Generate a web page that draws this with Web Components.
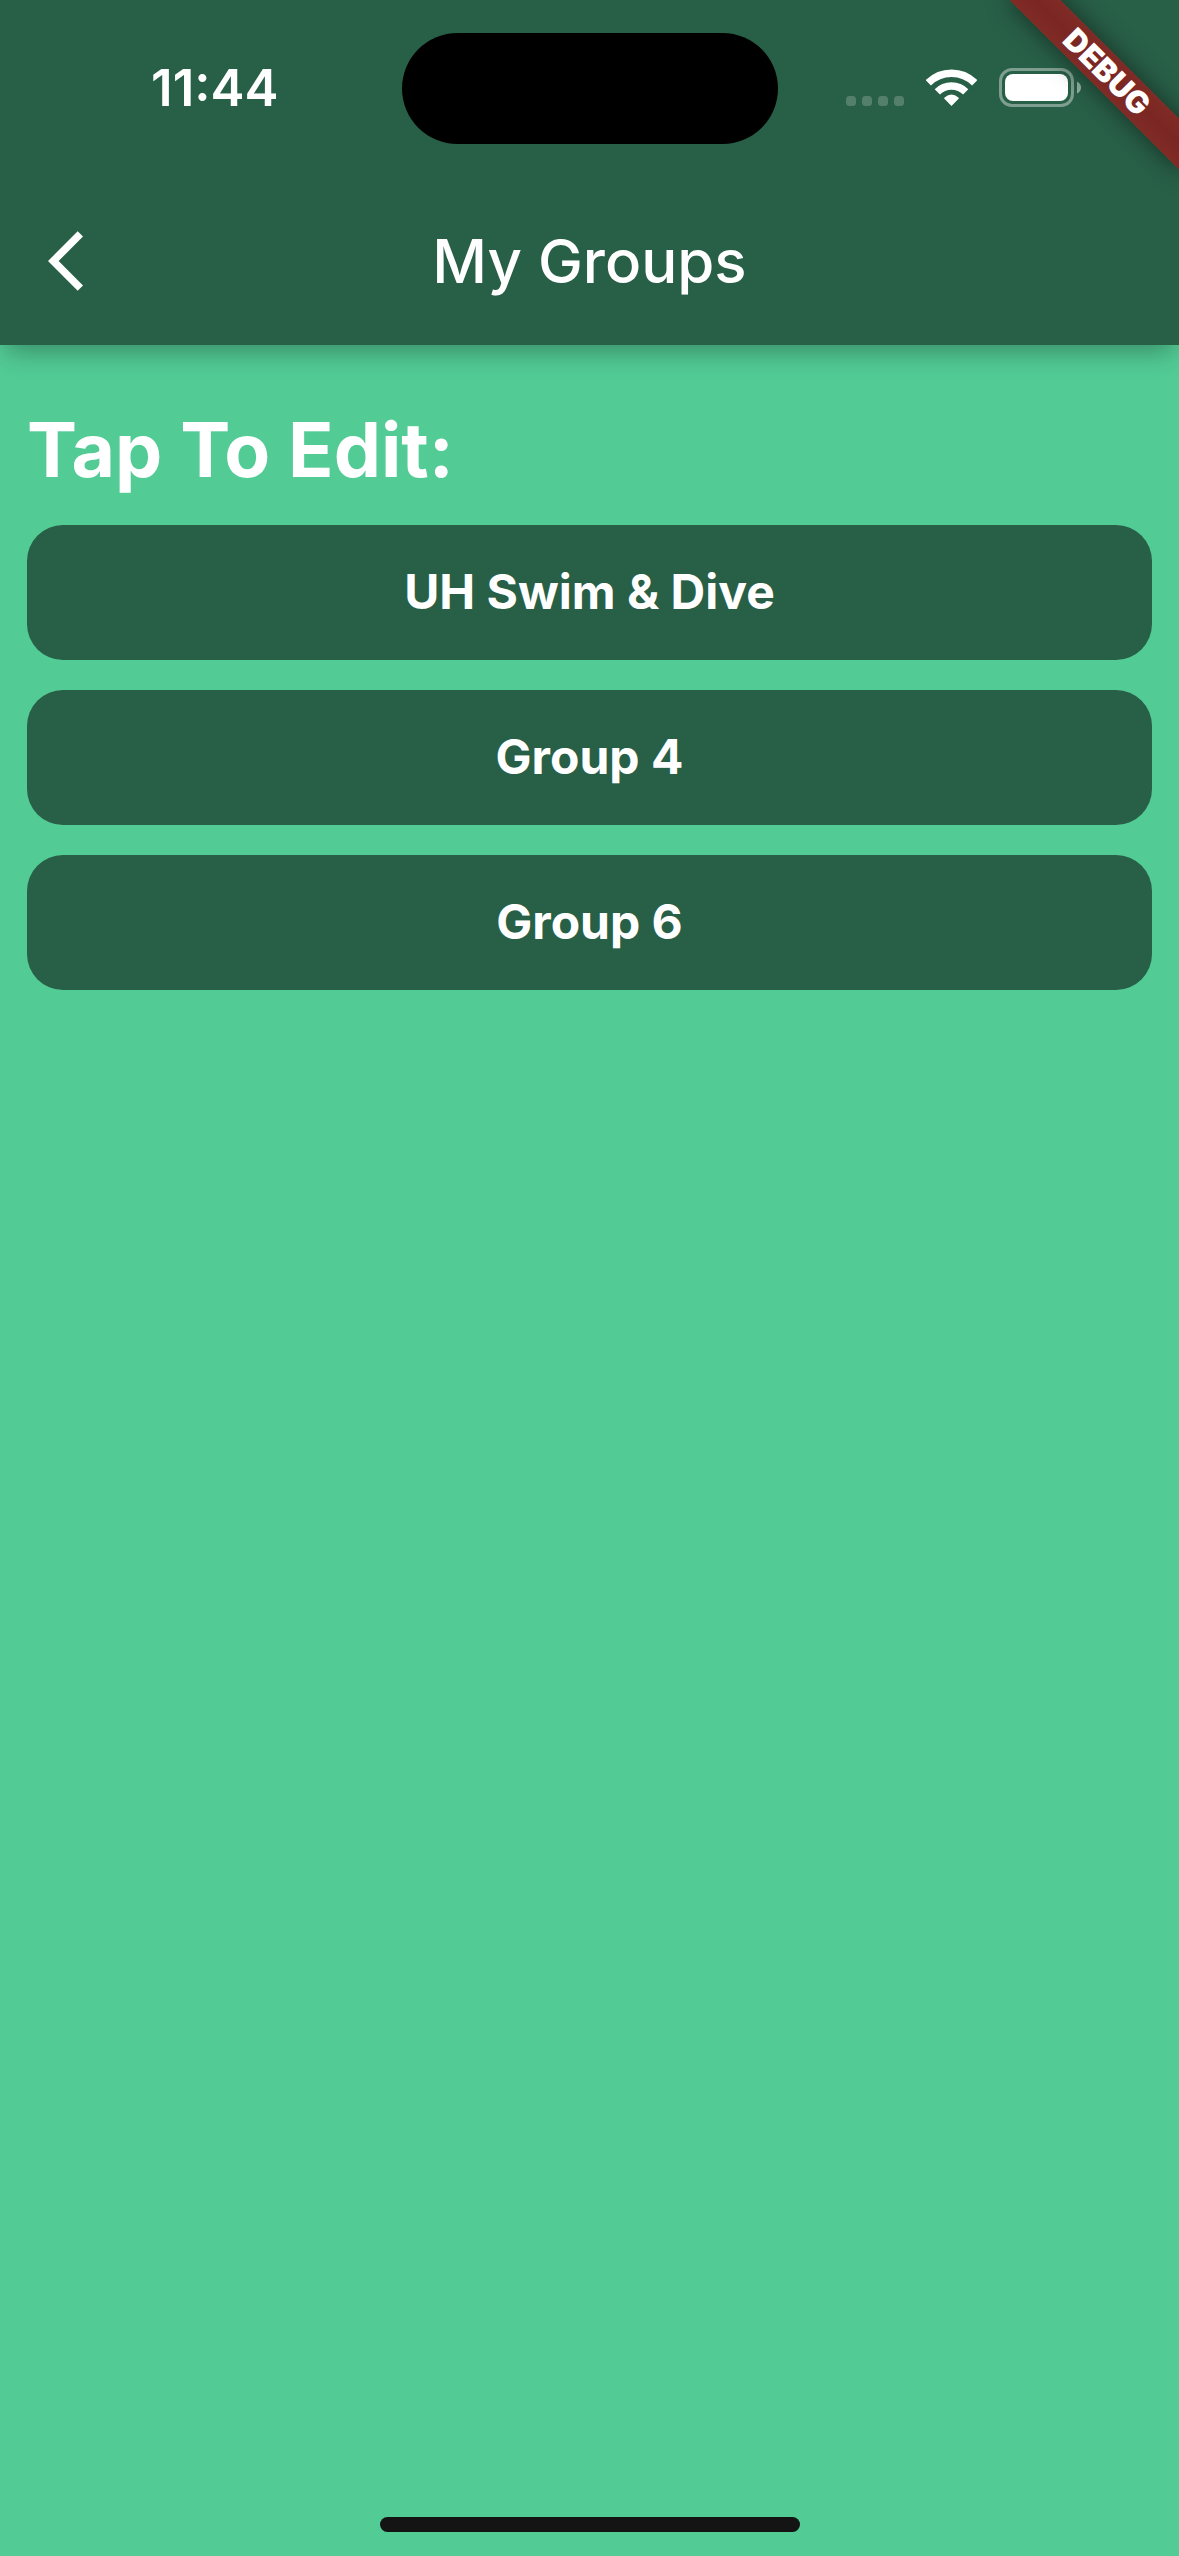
<!DOCTYPE html>
<html lang="en">
<head>
<meta charset="utf-8">
<meta name="viewport" content="width=device-width, initial-scale=1">
<title>My Groups</title>
<style>
  html { --dark: #285f47; --mint: #52cb95; }
  body { margin: 0; background: var(--mint); color: #fff; font-family: Inter, "Liberation Sans", sans-serif; }
</style>
</head>
<body>
<groups-screen></groups-screen>

<script>
const define = (name, html) => customElements.define(name, class extends HTMLElement {
  constructor() {
    super();
    this.attachShadow({ mode: 'open' }).innerHTML = html;
  }
});

define('status-bar', `
  <style>
    :host { display: grid; grid-template-columns: 1fr 376px 1fr; align-items: center; height: 177px; }
    time { padding: 0 0 2px 28px; text-align: center; font-size: 51px; line-height: 60px; font-weight: 600; }
    .island { height: 111px; border-radius: 56px; background: #000; }
    .icons { display: flex; justify-content: flex-end; align-items: center; gap: 22px; padding: 0 98px 2px 0; }
    svg { display: block; flex: none; }
  </style>
  <time><slot></slot></time>
  <div class="island"></div>
  <div class="icons">
    <svg width="58" height="39" viewBox="0 0 58 39" fill="#fff" fill-opacity=".2" aria-hidden="true">
      <rect x="0" y="28" width="10" height="10" rx="3.5"/>
      <rect x="16" y="28" width="10" height="10" rx="3.5"/>
      <rect x="32" y="28" width="10" height="10" rx="3.5"/>
      <rect x="48" y="28" width="10" height="10" rx="3.5"/>
    </svg>
    <svg width="51" height="39" viewBox="0 0 51 39" fill="none" stroke="#fff" stroke-width="7.4" aria-hidden="true">
      <path d="M2.3 14.8A32.8 32.8 0 0 1 48.7 14.8"/>
      <path d="M11.3 23.8A20.1 20.1 0 0 1 39.7 23.8"/>
      <path d="M25.5 37.9L18.4 30.8Q17.7 30.1 18.6 29.4Q25.5 23.8 32.4 29.4Q33.3 30.1 32.6 30.8Z" fill="#fff" stroke="none"/>
    </svg>
    <svg width="82" height="39" viewBox="0 0 82 39" aria-hidden="true">
      <rect x="1.5" y="1.5" width="72" height="36" rx="11.5" fill="none" stroke="#fff" stroke-opacity=".4" stroke-width="3"/>
      <rect x="6" y="6" width="63" height="27" rx="8" fill="#fff"/>
      <path d="M78 13.5Q82 15.5 82 19.5T78 25.5Z" fill="#fff" fill-opacity=".5"/>
    </svg>
  </div>`);

define('app-bar', `
  <style>
    :host { display: grid; grid-template-columns: 168px 1fr 168px; align-items: center; height: 168px; }
    button { display: flex; align-items: center; height: 144px; margin: 0; padding: 0 0 0 48px; border: 0; background: none; color: inherit; }
    h1 { margin: 0; text-align: center; font-size: 60px; line-height: 72px; font-weight: 450; }
  </style>
  <button type="button" aria-label="Back">
    <svg width="72" height="72" viewBox="0 0 24 24" fill="currentColor" aria-hidden="true"><path d="M11.67 3.87L9.9 2.1 0 12l9.9 9.9 1.77-1.77L3.54 12z"/></svg>
  </button>
  <h1><slot></slot></h1>`);

define('debug-banner', `
  <style>
    :host { position: absolute; top: 0; right: 0; width: 240px; height: 240px; overflow: hidden; pointer-events: none; }
    div { position: absolute; top: 54px; right: -48px; width: 240px; height: 36px; transform: rotate(45deg);
      background: linear-gradient(#802b26, #7a2622 50%, #802b26); box-shadow: 0 0 24px rgba(0, 0, 0, .5);
      text-align: center; font-size: 31px; line-height: 36px; font-weight: 900; }
  </style>
  <div><slot></slot></div>`);

define('group-button', `
  <style>
    :host { display: block; }
    button { display: block; width: 100%; height: 135px; margin: 0; padding: 0 36px 2px; border: 0; border-radius: 36px;
      background: var(--dark); color: inherit; font: 660 48px/60px Inter, "Liberation Sans", sans-serif; }
  </style>
  <button type="button"><slot></slot></button>`);

define('group-list', `
  <style>
    :host { display: flex; flex-direction: column; gap: 30px; padding: 60px 27px; }
    h2 { margin: 0; font-size: 75px; line-height: 90px; font-weight: 700; }
  </style>
  <h2><slot name="heading"></slot></h2>
  <slot></slot>`);

define('groups-screen', `
  <style>
    :host { display: flex; flex-direction: column; position: relative; min-height: 100vh; overflow: hidden; }
    header { background: var(--dark); box-shadow: 0 12px 24px -6px rgba(0, 0, 0, .32); }
    main { flex: 1; }
    footer { display: flex; justify-content: center; padding-bottom: 24px; }
    .home { width: 420px; height: 15px; border-radius: 8px; background: #141414; }
  </style>
  <header>
    <status-bar>11:44</status-bar>
    <app-bar>My Groups</app-bar>
  </header>
  <main>
    <group-list>
      <span slot="heading">Tap To Edit:</span>
      <group-button>UH Swim &amp; Dive</group-button>
      <group-button>Group 4</group-button>
      <group-button>Group 6</group-button>
    </group-list>
  </main>
  <footer><div class="home"></div></footer>
  <debug-banner>DEBUG</debug-banner>`);
</script>
</body>
</html>
